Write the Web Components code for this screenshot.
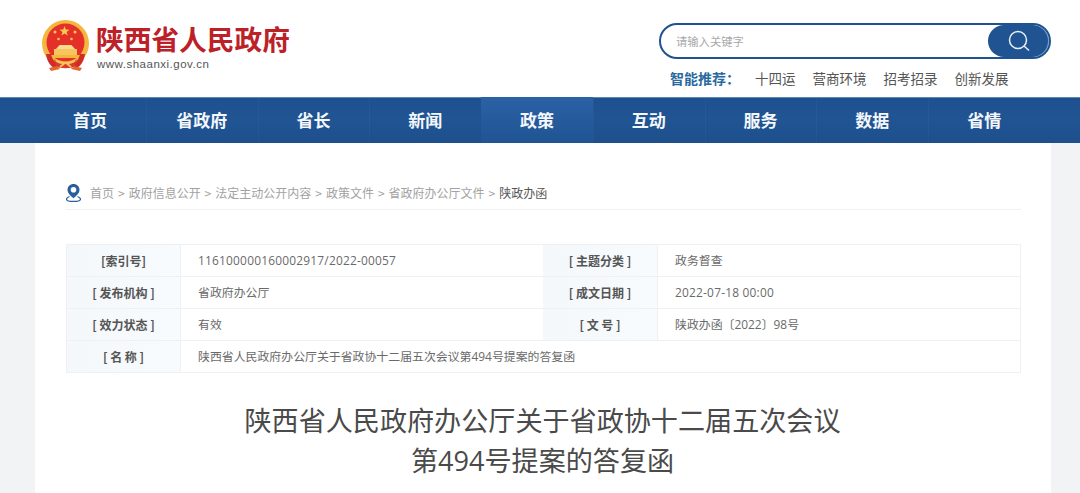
<!DOCTYPE html>
<html lang="zh-CN">
<head>
<meta charset="utf-8">
<title>陕西省人民政府</title>
<style>
  html, body { margin: 0; height: 493px; overflow: hidden; }
  body {
    background: #f2f3f5;
    font-family: "Noto Sans CJK SC", "Liberation Sans", sans-serif;
  }
</style>
</head>
<body>
<gov-header></gov-header>
<gov-nav>
  <nav-item>首页</nav-item>
  <nav-item>省政府</nav-item>
  <nav-item>省长</nav-item>
  <nav-item>新闻</nav-item>
  <nav-item active>政策</nav-item>
  <nav-item>互动</nav-item>
  <nav-item>服务</nav-item>
  <nav-item>数据</nav-item>
  <nav-item last>省情</nav-item>
</gov-nav>
<doc-card>
  <bread-crumb current="陕政办函">首页 &gt; 政府信息公开 &gt; 法定主动公开内容 &gt; 政策文件 &gt; 省政府办公厅文件 &gt;</bread-crumb>
  <info-table>
    <info-cell label>[索引号]</info-cell>
    <info-cell num>116100000160002917/2022-00057</info-cell>
    <info-cell label>[ 主题分类 ]</info-cell>
    <info-cell>政务督查</info-cell>
    <info-cell label>[ 发布机构 ]</info-cell>
    <info-cell>省政府办公厅</info-cell>
    <info-cell label>[ 成文日期 ]</info-cell>
    <info-cell num>2022-07-18 00:00</info-cell>
    <info-cell label>[ 效力状态 ]</info-cell>
    <info-cell>有效</info-cell>
    <info-cell label>[ 文 号 ]</info-cell>
    <info-cell>陕政办函〔2022〕98号</info-cell>
    <info-cell label last>[ 名 称 ]</info-cell>
    <info-cell wide last>陕西省人民政府办公厅关于省政协十二届五次会议第494号提案的答复函</info-cell>
  </info-table>
  <doc-title>陕西省人民政府办公厅关于省政协十二届五次会议<br>第494号提案的答复函</doc-title>
</doc-card>

<script>
const emblem = `
  <svg width="50" height="52" viewBox="0 0 50 52" aria-hidden="true">
    <circle cx="24.5" cy="24.500" r="23.500" fill="#f4b63f"/>
    <circle cx="24.5" cy="23.500" r="19" fill="#e5302a"/>
    <path d="M23.500 7l1.300 3.600 3.800.1-3 2.300 1.100 3.600-3.200-2.200-3.100 2.200 1.100-3.600-3-2.300 3.800-.1z" fill="#f8c94f"/>
    <circle cx="14" cy="13" r="1.500" fill="#f8c94f"/>
    <circle cx="34" cy="13" r="1.500" fill="#f8c94f"/>
    <circle cx="17.500" cy="20" r="1.300" fill="#f8c94f"/>
    <circle cx="30.500" cy="20" r="1.300" fill="#f8c94f"/>
    <path d="M15 30l3.500-4h12l3.500 4z" fill="#f9d98c"/>
    <rect x="13" y="30" width="23" height="6" fill="#f7c55e"/>
    <rect x="9" y="36" width="31" height="3" fill="#f4b63f"/>
    <path d="M5 35c1 8 5 13 10 15l4-4c-5-2-8-6-9-11z" fill="#cf2d26"/>
    <path d="M44 35c-1 8-5 13-10 15l-4-4c5-2 8-6 9-11z" fill="#cf2d26"/>
    <path d="M13 40c4 5 19 5 23 0l-2 7c-3 3-16 3-19 0z" fill="#d93a2a"/>
    <path d="M15 41.500c4 3.500 15 3.500 19 0M19 48l5.500-4.500L30 48" fill="none" stroke="#f7c55e" stroke-width="1.800"/>
    <path d="M8 49l8-2 3 3-9 2zM41 49l-8-2-3 3 9 2z" fill="#e5672f"/>
  </svg>`;

class GovHeader extends HTMLElement {
  constructor() {
    super();
    const shadowRoot = this.attachShadow({ mode: 'open' });
    shadowRoot.innerHTML = `
      <style>
        :host {
          display: flex;
          justify-content: space-between;
          height: 97px;
          padding: 0 29px 0 41px;
          box-sizing: border-box;
          background: #fff;
        }
        .logo { display: flex; gap: 5px; padding-top: 19px; }
        .name {
          margin: 3px 0 0;
          font-size: 27.700px;
          line-height: 32px;
          font-weight: 700;
          color: #bd2128;
          white-space: nowrap;
        }
        .url {
          margin: 3px 0 0 1px;
          font: 11.500px/14px "Liberation Sans", sans-serif;
          letter-spacing: .5px;
          color: #555;
        }
        .right { width: 392px; padding-top: 23px; box-sizing: border-box; }
        .search {
          display: flex;
          justify-content: space-between;
          align-items: center;
          height: 36px;
          box-sizing: border-box;
          padding-left: 15px;
          border: 2px solid #1f5390;
          border-radius: 18px;
          font-size: 11.300px;
          color: #a9a9a9;
        }
        .btn {
          display: flex;
          justify-content: center;
          align-items: center;
          width: 61px;
          height: 32px;
          background: #1f5391;
          border-radius: 16px;
          box-shadow: inset -1px 0 0 #7fa3cb;
        }
        .hot {
          display: flex;
          margin-top: 9px;
          padding-left: 11px;
          font-size: 13.500px;
          line-height: 20px;
          color: #555;
          white-space: nowrap;
        }
        .hot b { width: 85px; font-size: 14px; color: #2a6aa0; }
        .hot span { margin-right: 17px; }
      </style>
      <div class="logo">
        ${emblem}
        <div>
          <p class="name">陕西省人民政府</p>
          <p class="url">www.shaanxi.gov.cn</p>
        </div>
      </div>
      <div class="right">
        <div class="search">
          <span>请输入关键字</span>
          <div class="btn">
            <svg width="24" height="24" viewBox="0 0 24 24" fill="none" stroke="#e8f0f8" stroke-width="1.500" aria-hidden="true">
              <circle cx="11" cy="11" r="8.500"/>
              <path d="M17 17l5 4.500"/>
            </svg>
          </div>
        </div>
        <div class="hot">
          <b>智能推荐：</b>
          <span>十四运</span>
          <span>营商环境</span>
          <span>招考招录</span>
          <span>创新发展</span>
        </div>
      </div>
    `;
  }
}

class GovNav extends HTMLElement {
  constructor() {
    super();
    const shadowRoot = this.attachShadow({ mode: 'open' });
    shadowRoot.innerHTML = `
      <style>
        :host {
          display: flex;
          height: 46px;
          padding: 0 40px 0 34px;
          box-sizing: border-box;
          background: linear-gradient(#1d5190, #205493 50%, #1d4f8c);
          border-top: 1px solid #5d86b5;
        }
      </style>
      <slot></slot>
    `;
  }
}

class NavItem extends HTMLElement {
  constructor() {
    super();
    const shadowRoot = this.attachShadow({ mode: 'open' });
    shadowRoot.innerHTML = `
      <style>
        :host {
          display: flex;
          flex: 1;
          justify-content: center;
          align-items: center;
          padding-bottom: 2px;
          box-sizing: border-box;
          font-size: 17px;
          font-weight: 700;
          color: #f4f7fb;
          box-shadow: 1px 0 0 0 rgba(255,255,255,.03);
        }
        :host([last]) { box-shadow: none; }
        :host([active]) {
          margin-top: -1px;
          background: linear-gradient(#2a62a6, #205493);
        }
      </style>
      <slot></slot>
    `;
  }
}

class DocCard extends HTMLElement {
  constructor() {
    super();
    const shadowRoot = this.attachShadow({ mode: 'open' });
    shadowRoot.innerHTML = `
      <style>
        :host {
          display: block;
          width: 1016px;
          height: 350px;
          margin-left: 35px;
          padding: 0 30px 0 31px;
          box-sizing: border-box;
          background: #fff;
        }
      </style>
      <slot></slot>
    `;
  }
}

class BreadCrumb extends HTMLElement {
  constructor() {
    super();
    const shadowRoot = this.attachShadow({ mode: 'open' });
    shadowRoot.innerHTML = `
      <style>
        :host {
          display: flex;
          align-items: center;
          gap: 9px;
          height: 67px;
          padding-top: 32px;
          box-sizing: border-box;
          border-bottom: 1px solid #f0f1f2;
          font-size: 12px;
          word-spacing: 1.300px;
          color: #a2a2a2;
          white-space: nowrap;
        }
        svg { flex: none; }
        b { font-weight: 400; color: #555; margin-left: -5px; }
      </style>
      <svg width="15" height="19" viewBox="0 0 15 19" aria-hidden="true">
        <path d="M7.500 1C4 1 1.500 3.600 1.500 6.800c0 3.800 4 6.700 6 8.500 2-1.800 6-4.700 6-8.500C13.500 3.600 11 1 7.500 1z" fill="#2a5f9e"/>
        <circle cx="7.500" cy="6.800" r="2.800" fill="#fff"/>
        <path d="M3.500 13.500C1.500 14.300 .5 15.200 .5 16.200c0 1.500 3 2.300 7 2.300s7-.8 7-2.300c0-1-1-1.900-3-2.700" fill="none" stroke="#2a5f9e" stroke-width="1.300"/>
      </svg>
      <span><slot></slot></span>
      <b></b>
    `;
    shadowRoot.querySelector('b').textContent = this.getAttribute('current');
  }
}

class InfoTable extends HTMLElement {
  constructor() {
    super();
    const shadowRoot = this.attachShadow({ mode: 'open' });
    shadowRoot.innerHTML = `
      <style>
        :host {
          display: grid;
          grid-template-columns: 114px 362px 115px 1fr;
          grid-auto-rows: 32px;
          margin-top: 34px;
          border: 1px solid #eef0f2;
          border-width: 1px 1px 0 1px;
          width: 955px;
          box-sizing: border-box;
        }
      </style>
      <slot></slot>
    `;
  }
}

class InfoCell extends HTMLElement {
  constructor() {
    super();
    const shadowRoot = this.attachShadow({ mode: 'open' });
    shadowRoot.innerHTML = `
      <style>
        :host {
          display: flex;
          align-items: center;
          padding: 0 0 2px 17px;
          box-sizing: border-box;
          border-bottom: 1px solid #eef0f2;
          font-family: "Open Sans", "Noto Sans CJK SC", sans-serif;
          font-size: 11.900px;
          color: #6a6a6a;
          white-space: nowrap;
          overflow: hidden;
        }
        :host([num]) { letter-spacing: .22px; }
        :host([label]) {
          justify-content: center;
          padding: 0;
          font-family: "Noto Sans CJK SC", sans-serif;
          font-size: 12px;
          font-weight: 700;
          color: #555;
          background: linear-gradient(90deg, #f4f8fb, #f8fbfd);
          border-right: 1px solid #eef0f2;
        }
        :host([wide]) { grid-column: span 3; }
      </style>
      <slot></slot>
    `;
  }
}

class DocTitle extends HTMLElement {
  constructor() {
    super();
    const shadowRoot = this.attachShadow({ mode: 'open' });
    shadowRoot.innerHTML = `
      <style>
        :host {
          display: block;
          margin: 28px 2px 0 0;
          font-family: "Open Sans", "Noto Sans CJK SC", sans-serif;
          font-size: 27.100px;
          line-height: 40px;
          text-align: center;
          color: #4a4a4a;
        }
      </style>
      <slot></slot>
    `;
  }
}

customElements.define('gov-header', GovHeader);
customElements.define('gov-nav', GovNav);
customElements.define('nav-item', NavItem);
customElements.define('doc-card', DocCard);
customElements.define('bread-crumb', BreadCrumb);
customElements.define('info-table', InfoTable);
customElements.define('info-cell', InfoCell);
customElements.define('doc-title', DocTitle);
</script>
</body>
</html>
